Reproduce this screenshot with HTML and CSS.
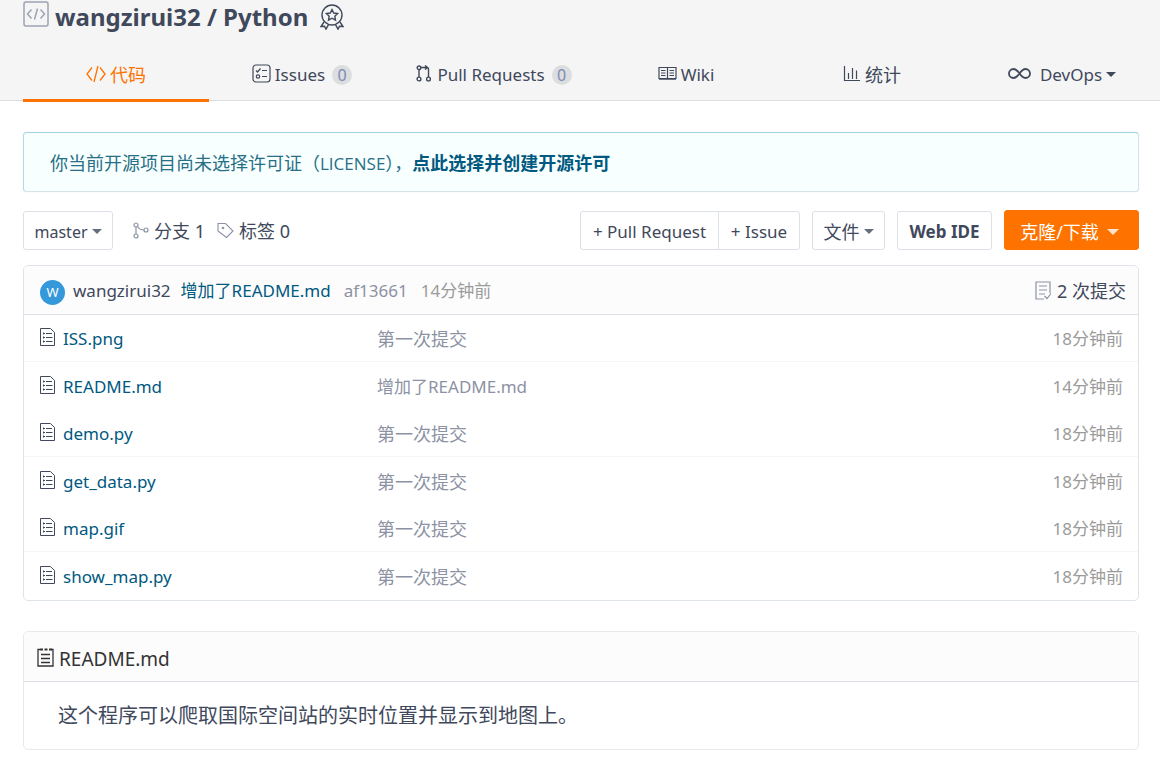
FILE: index.html
```html
<!DOCTYPE html>
<html lang="zh-CN">
<head>
<meta charset="utf-8">
<title>wangzirui32 / Python</title>
<link rel="stylesheet" href="styles.css">
</head>
<body>
<svg class="defs" aria-hidden="true">
  <symbol id="file" viewBox="0 0 16 18"><path d="M1 .5h9.500l4 4v13h-14v-17zM3 5.500h2M3 9.500h2M3 13.500h2M6 5.500h6M6 9.500h6.500M6 13.500h6.500" fill="none" stroke="currentColor"/><path d="M3.500 4.500v2M3.500 8.500v2M3.500 12.500v2" stroke="currentColor"/></symbol>
</svg>
<header class="top">
  <div class="wrap">
    <h1 class="title">
      <svg class="repo-icon" width="26" height="26" viewBox="0 0 26 26" fill="none" stroke="currentColor" stroke-width="1.500"><rect x="1" y="1" width="24" height="24" rx="2"/><path d="M8.500 8.500l-4 4.500 4 4.500M17.500 8.500l4 4.500-4 4.500M14.500 7.500l-3 11"/></svg>
      <span>wangzirui32 / Python</span>
      <svg class="medal" width="24" height="26" viewBox="0 0 24 26" fill="none" stroke="currentColor" stroke-width="1.400"><circle cx="12" cy="11" r="10"/><path d="M12 5.500l1.700 3.500 3.900.5-2.800 2.700.7 3.900-3.500-1.900-3.500 1.900.7-3.900-2.800-2.700 3.900-.5zM4 18l-3 4.500 3.500-.3 1.500 3 2.500-4.500M20 18l3 4.500-3.500-.3-1.500 3-2.500-4.500"/></svg>
    </h1>
    <nav class="tabs">
      <a class="tab active" href="#"><svg width="20" height="18" viewBox="0 0 20 18" fill="none" stroke="currentColor" stroke-width="1.300"><path d="M6 2.500L1 9l5 6.500M14 2.500L19 9l-5 6.500M12 1L8 17"/></svg><span class="zh">代码</span></a>
      <a class="tab" href="#"><svg width="19" height="19" viewBox="0 0 19 19" fill="none" stroke="currentColor" stroke-width="1.200"><rect x="1" y="1" width="17" height="17" rx="3"/><path d="M4 6.500l1.500 1.500 3-3.500M10 6.500h5M10 12.500h5"/><circle cx="6" cy="12.500" r="1.700"/></svg><span>Issues</span><span class="count">0</span></a>
      <a class="tab" href="#"><svg width="17" height="17" viewBox="0 0 17 17" fill="none" stroke="currentColor" stroke-width="1.400"><circle cx="3" cy="2.800" r="1.800"/><circle cx="3" cy="14" r="1.900"/><circle cx="12.500" cy="14" r="1.900"/><path d="M3 4.600V12M5 2.500h6q1.500 0 1.500 1.500v8M9 .5l2.500 2L9 4.500"/></svg><span>Pull Requests</span><span class="count">0</span></a>
      <a class="tab" href="#"><svg width="19" height="15" viewBox="0 0 19 15" fill="none" stroke="currentColor" stroke-width="1.200"><path d="M1 1.500h17v11H1zM9.500 1.500v12M3 4.500h4.500M3 7h4.500M3 9.500h4.500M11.500 4.500H16M11.500 7H16M11.500 9.500H16M1 13.200h17"/></svg><span>Wiki</span></a>
      <a class="tab" href="#"><svg width="17" height="17" viewBox="0 0 17 17" fill="none" stroke="currentColor" stroke-width="1.200"><path d="M1.500 1v14.500H17M5.500 14V8M9.500 14V3M13.500 14V5.500"/></svg><span class="zh gap">统计</span></a>
      <a class="tab last" href="#"><svg width="23" height="13" viewBox="0 0 23 13" fill="none" stroke="currentColor" stroke-width="1.800"><path d="M11.500 6.500C9 3 7.500 2 5.500 2a4.500 4.500 0 0 0 0 9c2 0 3.500-1 6-4.500s4-4.500 6-4.500a4.500 4.500 0 0 1 0 9c-2 0-3.500-1-6-4.500z"/></svg><span class="devops">DevOps</span><i class="caret"></i></a>
    </nav>
  </div>
</header>
<main class="wrap">
  <div class="alert">你当前开源项目尚未选择许可证（<span class="latin">LICENSE</span>），<a href="#">点此选择并创建开源许可</a></div>
  <div class="toolbar">
    <button class="btn branch">master<i class="caret"></i></button>
    <a class="stat" href="#"><svg width="16" height="17" viewBox="0 0 16 17" fill="none" stroke="currentColor" stroke-width="1.200"><circle cx="3" cy="3" r="2"/><circle cx="3" cy="14" r="2"/><circle cx="13" cy="8" r="2"/><path d="M3 5v7M4.500 4.500C6 7 8 8 11 8"/></svg><span>分支 1</span></a>
    <a class="stat" href="#"><svg width="17" height="17" viewBox="0 0 17 17" fill="none" stroke="currentColor" stroke-width="1.100"><path d="M1 1.500h7.500L16 9l-6.500 6.500L1 9z"/><circle cx="6" cy="6" r=".8"/></svg><span>标签 0</span></a>
    <span class="spacer"></span>
    <div class="group"><button class="btn pull">+ Pull Request</button><button class="btn issue">+ Issue</button></div>
    <button class="btn files">文件<i class="caret"></i></button>
    <button class="btn ide">Web IDE</button>
    <button class="btn clone">克隆/下载<i class="caret"></i></button>
  </div>
  <section class="panel">
    <div class="commit">
      <span class="avatar">W</span>
      <a class="author" href="#">wangzirui32</a>
      <a class="message" href="#">增加了README.md</a>
      <a class="sha" href="#">af13661</a>
      <span class="when">14分钟前</span>
      <span class="spacer"></span>
      <a class="total" href="#"><svg width="17" height="19" viewBox="0 0 17 19" fill="none" stroke="currentColor" stroke-width="1.200"><path d="M15 12V1H1v17h8M4 5h8M4 9h8M4 13h6M9.500 15l2.500 2.500 4-5"/></svg><span>2 次提交</span></a>
    </div>
    <table class="tree">
      <tbody>
      <tr><td class="name"><a href="#"><svg width="16" height="18"><use href="#file"/></svg>ISS.png</a></td><td class="note zh">第一次提交</td><td class="age">18分钟前</td></tr>
      <tr><td class="name"><a href="#"><svg width="16" height="18"><use href="#file"/></svg>README.md</a></td><td class="note">增加了README.md</td><td class="age">14分钟前</td></tr>
      <tr><td class="name"><a href="#"><svg width="16" height="18"><use href="#file"/></svg>demo.py</a></td><td class="note zh">第一次提交</td><td class="age">18分钟前</td></tr>
      <tr><td class="name"><a href="#"><svg width="16" height="18"><use href="#file"/></svg>get_data.py</a></td><td class="note zh">第一次提交</td><td class="age">18分钟前</td></tr>
      <tr><td class="name"><a href="#"><svg width="16" height="18"><use href="#file"/></svg>map.gif</a></td><td class="note zh">第一次提交</td><td class="age">18分钟前</td></tr>
      <tr><td class="name"><a href="#"><svg width="16" height="18"><use href="#file"/></svg>show_map.py</a></td><td class="note zh">第一次提交</td><td class="age">18分钟前</td></tr>
      </tbody>
    </table>
  </section>
  <section class="panel readme">
    <h2><svg width="17" height="19" viewBox="0 0 17 19" fill="none" stroke="currentColor" stroke-width="1.300"><path d="M3 1.500H1V18h15V1.500h-2M4 6.500h9M4 10.500h9M4 14.500h9"/><path d="M3 1.500h3M7.500 1.500h3M12 1.500h3" stroke-width="2"/></svg>README.md</h2>
    <p>这个程序可以爬取国际空间站的实时位置并显示到地图上。</p>
  </section>
</main>
</body>
</html>
```
FILE: styles.css
```css
* { box-sizing: border-box; }
body {
  margin: 0;
  background: #fff;
  color: #40485b;
  font: 17px/24px "Noto Sans", "Noto Sans CJK SC", sans-serif;
}
a { color: inherit; text-decoration: none; }
svg { flex: none; }
.defs { display: none; }
.wrap { margin: 0 21px 0 23px; }
.spacer { flex: 1; }
.caret {
  border: 5px solid transparent;
  border-top-color: currentColor;
  border-bottom: 0;
}

.top { background: #f5f5f5; border-bottom: 1px solid #dcdddf; }
.title {
  display: flex;
  align-items: center;
  height: 34px;
  margin: 0;
  font-size: 24px;
  line-height: 34px;
}
.repo-icon { margin: 0 6px 6px 0; color: #9da3b4; }
.medal { margin-left: 12px; }
.tabs {
  display: grid;
  grid-template-columns: 186fr 186fr 198fr 186fr 186fr 174fr;
  padding-top: 14px;
}
.tab {
  display: flex;
  align-items: center;
  justify-content: center;
  height: 54px;
  margin-bottom: -2px;
  padding-top: 2px;
  border-bottom: 3px solid transparent;
}
.tab svg { margin: 0 4px 2px 0; }
.tab.active { color: #fe7300; border-color: #fe7300; }
.tab.last { padding-left: 20px; }
.tab .gap { margin-left: 1px; }
.tab .devops { margin: 0 4px 0 5px; }
.zh { font-size: 18px; }
.count {
  width: 20px;
  height: 20px;
  margin-left: 7px;
  border-radius: 50%;
  background: #dcdddf;
  color: #7a8cb5;
  font-size: 16px;
  line-height: 20px;
  text-align: center;
}

.alert {
  margin-top: 31px;
  padding: 18px 26px 16px;
  border: 1px solid #d5e3e9;
  border-top-color: #a3d3de;
  border-left-color: #b3d9e2;
  border-radius: 4px;
  box-shadow: 0 0 1px #c5dde4;
  background: #f8ffff;
  color: #276f86;
  font-family: "Open Sans", "Noto Sans CJK SC", sans-serif;
  font-size: 18px;
}
.alert a { color: #005980; font-weight: bold; }
.latin { font-size: 17px; line-height: 20px; }

.toolbar { display: flex; align-items: center; height: 40px; margin: 18px 0 15px; }
.btn {
  display: flex;
  align-items: center;
  justify-content: center;
  height: 39px;
  margin: 0;
  padding: 3px 11px 0;
  border: 1px solid #dce1e8;
  border-radius: 3px;
  background: #fff;
  color: inherit;
  font: inherit;
  white-space: nowrap;
}
.btn .caret { margin-left: 4px; opacity: .8; }
.branch { width: 90px; margin-right: 20px; font-size: 16px; }
.stat { display: flex; align-items: center; gap: 5px; margin-right: 12px; padding-top: 2px; font-size: 18px; }
.stat svg { margin-bottom: 2px; color: #8c92a4; }
.group { display: flex; margin-right: 12px; }
.pull { width: 139px; border-radius: 3px 0 0 3px; }
.issue { width: 82px; margin-left: -1px; border-radius: 0 3px 3px 0; }
.files { width: 73px; margin-right: 12px; font-size: 18px; }
.ide { width: 95px; margin-right: 12px; font-weight: bold; }
.clone { width: 135px; height: 40px; padding-right: 15px; border-color: #fe7300; background: #fe7300; color: #fff; font-size: 18px; }
.clone .caret { margin-left: 8px; border-width: 6px 6px 0; }

.panel { border: 1px solid #dfe4ea; border-radius: 5px; overflow: hidden; }
.commit {
  display: flex;
  align-items: center;
  height: 49px;
  padding: 2px 12px 0 16px;
  border-bottom: 1px solid #dce1e8;
  background: #fcfcfc;
}
.avatar {
  width: 25px;
  height: 25px;
  margin: 2px 8px 0 0;
  border-radius: 50%;
  background: #3498db;
  color: #fff;
  font-size: 13px;
  line-height: 25px;
  text-align: center;
}
.author { margin-right: 10px; }
.message { margin-right: 13px; color: #005980; }
.sha { margin-right: 13px; color: #8c92a4; }
.when, .age { color: #9b9b9b; }
.total { display: flex; align-items: center; gap: 5px; font-size: 18px; }
.total svg { margin-bottom: 2px; color: #8c92a4; }

.tree { width: 100%; border-spacing: 0; table-layout: fixed; }
.tree tr { height: 48px; }
.tree tr:nth-child(odd) { height: 47px; }
.tree tr:nth-child(odd) td { border-bottom: 1px solid #f5f6f7; }
.tree td { padding: 2px 0 0; }
.tree .name { width: 353px; }
.name a { display: flex; align-items: center; gap: 7px; padding-left: 16px; color: #005980; }
.name svg { margin-bottom: 4px; color: #40485b; }
.note { color: #8c92a4; }
.tree .age { width: 150px; padding-right: 15px; text-align: right; }

.readme { margin: 30px 0 24px; border-color: #e7e9ed; }
.readme h2 {
  display: flex;
  align-items: center;
  gap: 5px;
  height: 50px;
  margin: 0;
  padding: 5px 13px 0;
  border-bottom: 1px solid #dce1e8;
  background: #fcfcfc;
  color: #333;
  font-size: 19px;
  font-weight: normal;
}
.readme h2 svg { margin-bottom: 4px; }
.readme p { margin: 0; padding: 20px 34px 19px; font-size: 20px; line-height: 28px; }
```
